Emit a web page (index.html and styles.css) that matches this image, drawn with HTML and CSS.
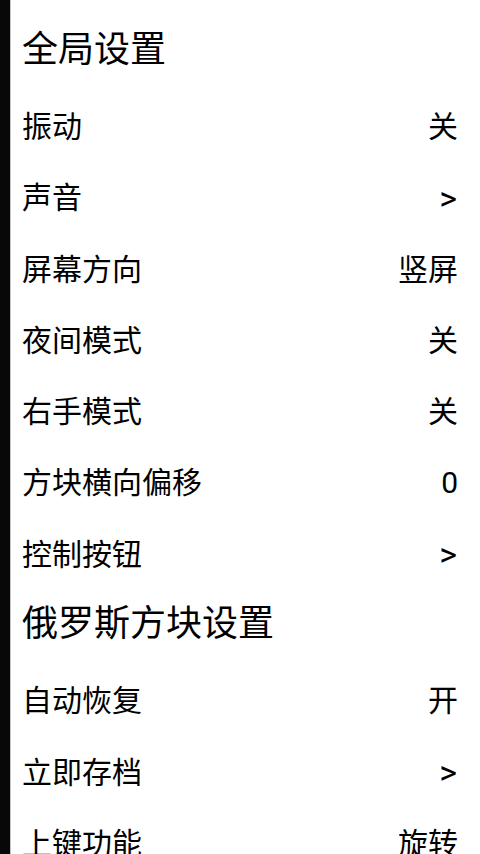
FILE: index.html
```html
<!DOCTYPE html>
<html lang="zh-CN">
<head>
<meta charset="utf-8">
<title>设置</title>
<link rel="stylesheet" href="styles.css">
</head>
<body>
<div class="screen">
  <div class="bar"></div>
  <div class="list">
    <div class="heading first">全局设置</div>
    <div class="item"><span class="label">振动</span><span class="value">关</span></div>
    <div class="item"><span class="label">声音</span><span class="value arrow">&gt;</span></div>
    <div class="item"><span class="label">屏幕方向</span><span class="value">竖屏</span></div>
    <div class="item"><span class="label">夜间模式</span><span class="value">关</span></div>
    <div class="item"><span class="label">右手模式</span><span class="value">关</span></div>
    <div class="item"><span class="label">方块横向偏移</span><span class="value">0</span></div>
    <div class="item"><span class="label">控制按钮</span><span class="value arrow">&gt;</span></div>
    <div class="heading">俄罗斯方块设置</div>
    <div class="item"><span class="label">自动恢复</span><span class="value">开</span></div>
    <div class="item"><span class="label">立即存档</span><span class="value arrow">&gt;</span></div>
    <div class="item"><span class="label">上键功能</span><span class="value">旋转</span></div>
  </div>
</div>
</body>
</html>
```
FILE: styles.css
```css
html, body {
  margin: 0;
  padding: 0;
  background: #ffffff;
}
body {
  width: 480px;
  height: 854px;
  overflow: hidden;
  font-family: Roboto, "Noto Sans CJK SC", sans-serif;
  color: #000000;
}
.screen {
  display: flex;
  height: 854px;
}
.bar {
  width: 10px;
  flex: none;
  background: #080808;
  border-right: 1px solid #c4c4c4;
}
.list {
  flex: 1;
  display: flex;
  flex-direction: column;
  padding: 0 22px 0 11px;
}
.heading {
  flex: none;
  height: 75.5px;
  box-sizing: border-box;
  padding-bottom: 6px;
  display: flex;
  align-items: center;
  font-size: 36px;
  line-height: 1.2;
}
.heading.first {
  height: 91.5px;
  padding-top: 16px;
}
.item {
  flex: none;
  height: 71.25px;
  display: flex;
  align-items: center;
  justify-content: space-between;
  font-size: 30px;
  line-height: 1.2;
}
.value.arrow {
  font-size: 34px;
  padding-right: 1px;
}
```
